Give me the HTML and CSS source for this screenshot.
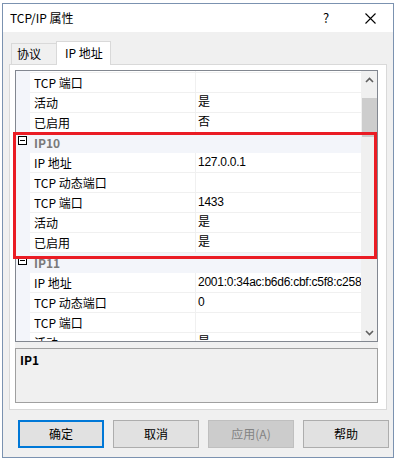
FILE: index.html
```html
<!DOCTYPE html>
<html lang="zh-CN">
<head>
    <meta charset="UTF-8">
    <title>TCP/IP 属性</title>
    <link rel="stylesheet" href="styles.css">
</head>
<body>
    <div class="win">
        <div class="titlebar">
            <span class="title">TCP/IP 属性</span>
            <span class="help-btn">?</span>
            <span class="close-btn">
                <svg width="11" height="11" viewBox="0 0 11 11"><path d="M0.5 0.5 L10.5 10.5 M10.5 0.5 L0.5 10.5" stroke="#000" stroke-width="1.1" fill="none"/></svg>
            </span>
        </div>
        <div class="dlg">
            <div class="tabs">
                <div class="tab">协议</div>
                <div class="tab active">IP 地址</div>
            </div>
            <div class="panel">
                <div class="pgrid">
                    <div class="gridview">
                        <div class="rows">
                            <div class="row part"><div class="mg"></div><div class="nm"></div><div class="vl"></div></div>
                            <div class="row"><div class="mg"></div><div class="nm">TCP 端口</div><div class="vl"></div></div>
                            <div class="row"><div class="mg"></div><div class="nm">活动</div><div class="vl">是</div></div>
                            <div class="row"><div class="mg"></div><div class="nm">已启用</div><div class="vl">否</div></div>
                            <div class="row cat"><div class="mg"><span class="box"></span></div><div class="nm">IP10</div></div>
                            <div class="row"><div class="mg"></div><div class="nm">IP 地址</div><div class="vl">127.0.0.1</div></div>
                            <div class="row"><div class="mg"></div><div class="nm">TCP 动态端口</div><div class="vl"></div></div>
                            <div class="row"><div class="mg"></div><div class="nm">TCP 端口</div><div class="vl">1433</div></div>
                            <div class="row"><div class="mg"></div><div class="nm">活动</div><div class="vl">是</div></div>
                            <div class="row"><div class="mg"></div><div class="nm">已启用</div><div class="vl">是</div></div>
                            <div class="row cat"><div class="mg"><span class="box"></span></div><div class="nm">IP11</div></div>
                            <div class="row"><div class="mg"></div><div class="nm">IP 地址</div><div class="vl">2001:0:34ac:b6d6:cbf:c5f8:c258</div></div>
                            <div class="row"><div class="mg"></div><div class="nm">TCP 动态端口</div><div class="vl">0</div></div>
                            <div class="row"><div class="mg"></div><div class="nm">TCP 端口</div><div class="vl"></div></div>
                            <div class="row"><div class="mg"></div><div class="nm">活动</div><div class="vl">是</div></div>
                        </div>
                        <div class="vscroll">
                            <div class="arrow">
                                <svg width="9" height="6" viewBox="0 0 9 6"><path d="M1 5 L4.5 1.5 L8 5" stroke="#606060" stroke-width="1.6" fill="none"/></svg>
                            </div>
                            <div class="track"><div class="thumb"></div></div>
                            <div class="arrow">
                                <svg width="9" height="6" viewBox="0 0 9 6"><path d="M1 1 L4.5 4.5 L8 1" stroke="#606060" stroke-width="1.6" fill="none"/></svg>
                            </div>
                        </div>
                    </div>
                    <div class="desc"><b>IP1</b></div>
                    <!-- 红框标注 -->
                    <div class="mark"></div>
                </div>
            </div>
            <div class="buttons">
                <div class="btn default">确定</div>
                <div class="btn">取消</div>
                <div class="btn disabled">应用(A)</div>
                <div class="btn">帮助</div>
            </div>
        </div>
    </div>
</body>
</html>
```

FILE: styles.css
```css
* {
  margin: 0;
  padding: 0;
  box-sizing: border-box;
}

body {
  background: #fff;
  font-family: "Noto Sans CJK SC", "Noto Sans", sans-serif;
  font-size: 12px;
  color: #000;
}

.win {
  width: 392px;
  height: 455px;
  margin: 3px 0 0 2px;
  border: 1px solid #7b92b0;
  display: flex;
  flex-direction: column;
}

.titlebar {
  height: 28px;
  background: #fff;
  display: flex;
  align-items: center;
  padding-left: 7px;
}

.title {
  flex: 1;
  line-height: 16px;
}

.help-btn {
  width: 22px;
  font-size: 13px;
  line-height: 16px;
  margin-right: 2px;
}

.close-btn {
  width: 46px;
  height: 28px;
  display: flex;
  align-items: center;
  padding-left: 18px;
}

.dlg {
  flex: 1;
  background: #f0f0f0;
  padding: 9px 0 0 6px;
}

.tabs {
  height: 23px;
  display: flex;
  align-items: flex-end;
  padding-left: 2px;
  position: relative;
  z-index: 1;
}

.tab {
  height: 21px;
  width: 46px;
  border: 1px solid #d9d9d9;
  border-bottom: 0;
  background: #f0f0f0;
  line-height: 19px;
  padding-left: 5px;
}

.tab.active {
  height: 24px;
  width: 55px;
  margin-bottom: -1px;
  margin-left: -1px;
  background: #fff;
  padding-left: 8px;
  line-height: 22px;
}

.panel {
  width: 378px;
  height: 346px;
  border: 1px solid #d9d9d9;
  background: #fff;
  padding: 5px 0 0 5px;
}

.pgrid {
  width: 363px;
  height: 333px;
  background: #f0f0f0;
  position: relative;
  display: flex;
  flex-direction: column;
}

.gridview {
  height: 273px;
  border: 1px solid #828790;
  background: #fff;
  display: flex;
  overflow: hidden;
}

.rows {
  width: 345px;
  overflow: hidden;
}

.row {
  height: 20px;
  display: flex;
  line-height: 19px;
}

.row.part {
  height: 2px;
}

.mg {
  width: 14px;
  background: #f3f5fa;
  flex-shrink: 0;
  position: relative;
}

.nm {
  width: 166px;
  padding-left: 4px;
  border-bottom: 1px solid #f0f0f0;
  border-right: 1px solid #f0f0f0;
  white-space: nowrap;
  flex-shrink: 0;
}

.vl {
  flex: 1;
  padding-left: 2px;
  border-bottom: 1px solid #f0f0f0;
  white-space: nowrap;
  overflow: hidden;
  font-family: "Liberation Sans", "Noto Sans CJK SC", sans-serif;
  letter-spacing: -0.25px;
}

.row.cat {
  background: #f3f5fa;
}

.row.cat .nm {
  flex: 1;
  border: 0;
  font-weight: bold;
  color: #7a7a7a;
}

.box {
  position: absolute;
  left: 2px;
  top: 3px;
  width: 9px;
  height: 9px;
  border: 1px solid #000;
  background: #fff;
}

.box::after {
  content: "";
  position: absolute;
  left: 1px;
  top: 3px;
  width: 5px;
  height: 1px;
  background: #000;
}

.vscroll {
  width: 16px;
  background: #f0f0f0;
  display: flex;
  flex-direction: column;
}

.arrow {
  height: 17px;
  display: flex;
  align-items: center;
  justify-content: center;
}

.track {
  flex: 1;
  padding-top: 10px;
}

.thumb {
  height: 39px;
  margin-left: 1px;
  background: #cdcdcd;
}

.desc {
  margin-top: 6px;
  height: 55px;
  border: 1px solid #a0a0a0;
  background: #f0f0f0;
  padding: 3px 4px;
  line-height: 16px;
}

.mark {
  position: absolute;
  left: -2px;
  top: 62px;
  width: 364px;
  height: 127px;
  border: 3px solid #ea1c24;
}

.buttons {
  display: flex;
  gap: 9px;
  margin-top: 10px;
  padding-left: 9px;
}

.btn {
  width: 86px;
  height: 28px;
  border: 1px solid #adadad;
  background: #e1e1e1;
  text-align: center;
  line-height: 26px;
}

.btn.default {
  border: 2px solid #0078d7;
  line-height: 24px;
}

.btn.disabled {
  background: #cccccc;
  border-color: #bfbfbf;
  color: #838383;
}
```
